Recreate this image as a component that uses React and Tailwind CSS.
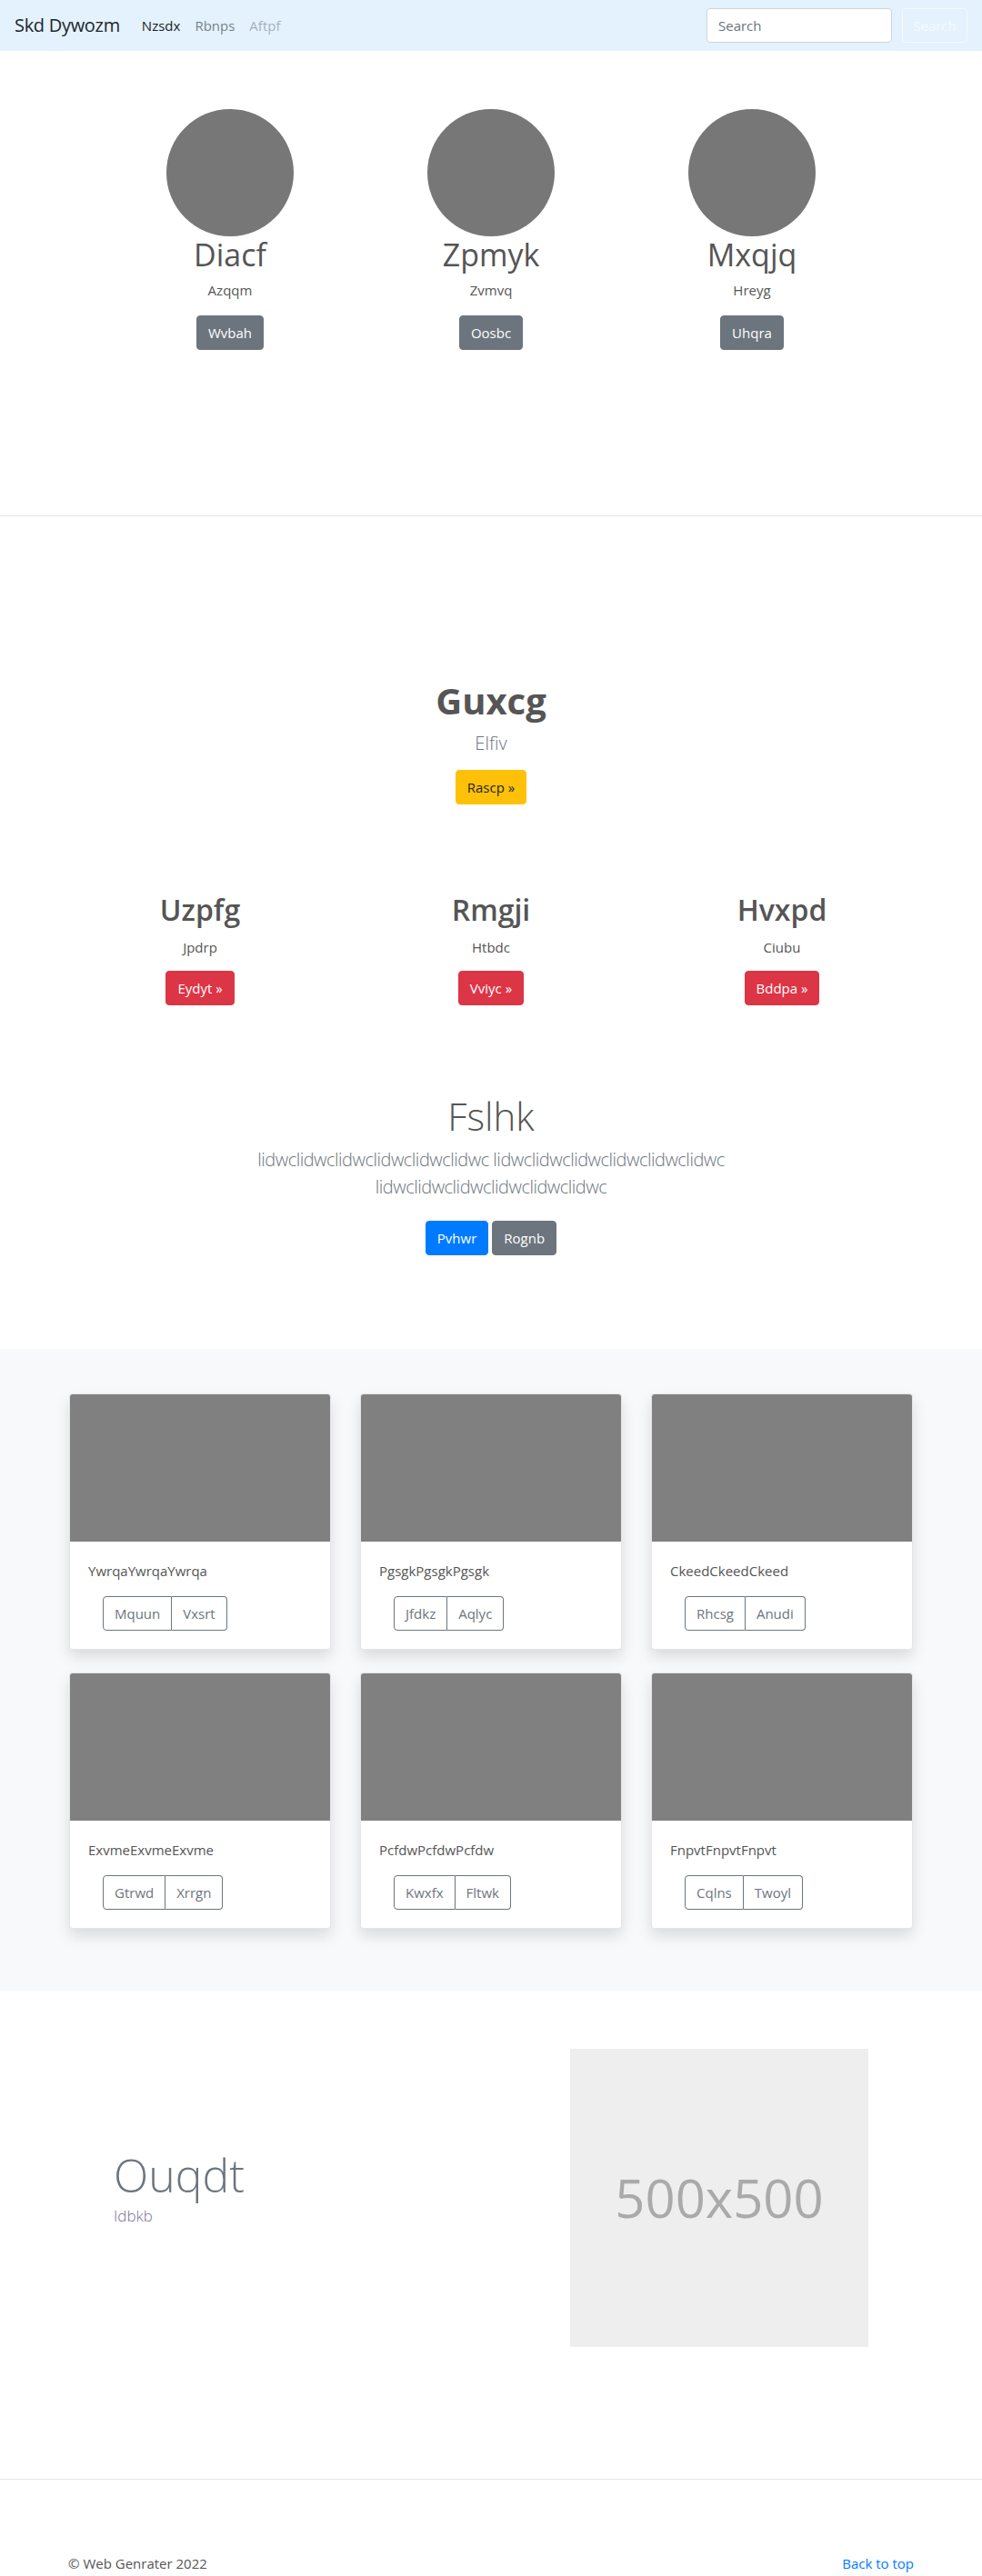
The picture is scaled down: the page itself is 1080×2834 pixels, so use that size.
import React from 'react';

const people = [
  { name: 'Diacf', sub: 'Azqqm', btn: 'Wvbah' },
  { name: 'Zpmyk', sub: 'Zvmvq', btn: 'Oosbc' },
  { name: 'Mxqjq', sub: 'Hreyg', btn: 'Uhqra' },
];

const columns = [
  { title: 'Uzpfg', sub: 'Jpdrp', btn: 'Eydyt »' },
  { title: 'Rmgji', sub: 'Htbdc', btn: 'Vviyc »' },
  { title: 'Hvxpd', sub: 'Ciubu', btn: 'Bddpa »' },
];

const cards = [
  { text: 'YwrqaYwrqaYwrqa', a: 'Mquun', b: 'Vxsrt' },
  { text: 'PgsgkPgsgkPgsgk', a: 'Jfdkz', b: 'Aqlyc' },
  { text: 'CkeedCkeedCkeed', a: 'Rhcsg', b: 'Anudi' },
  { text: 'ExvmeExvmeExvme', a: 'Gtrwd', b: 'Xrrgn' },
  { text: 'PcfdwPcfdwPcfdw', a: 'Kwxfx', b: 'Fltwk' },
  { text: 'FnpvtFnpvtFnpvt', a: 'Cqlns', b: 'Twoyl' },
];

export default function App() {
  return (
    <div className="bg-white text-[#555]" style={{ fontFamily: '"Open Sans", "Noto Sans", sans-serif' }}>
      {/* Navbar */}
      <nav className="h-14 bg-[#e3f2fd] flex items-center justify-between px-4">
        <div className="flex items-center">
          <span className="text-[20px] tracking-[-0.3px] text-[#212529] mr-4">Skd Dywozm</span>
          <a className="px-2 text-[15px] text-black/90">Nzsdx</a>
          <a className="px-2 text-[15px] text-black/50">Rbnps</a>
          <a className="px-2 text-[15px] text-black/30">Aftpf</a>
        </div>
        <div className="flex items-center">
          <input
            placeholder="Search"
            className="w-[204px] h-[38px] bg-white border border-[#ced4da] rounded px-3 text-[15px] placeholder:text-[#6c757d] outline-none"
          />
          <button className="ml-[11px] w-[72px] h-[38px] border border-[#f8f9fa] rounded text-[15px] text-[#f8f9fa]">
            Search
          </button>
        </div>
      </nav>

      {/* Circles */}
      <section className="pt-16 pb-[182px]">
        <div className="mx-auto w-[861px] grid grid-cols-3">
          {people.map((p) => (
            <div key={p.name} className="flex flex-col items-center">
              <div className="w-[140px] h-[140px] rounded-full bg-[#777]" />
              <h2 className="text-[34px] leading-[1.2] text-[#555]">{p.name}</h2>
              <p className="mt-[6px] text-[15px] leading-6 text-[#555]">{p.sub}</p>
              <button className="mt-4 bg-[#6c757d] text-white text-[15px] leading-6 px-3 py-1.5 border border-[#6c757d] rounded">
                {p.btn}
              </button>
            </div>
          ))}
        </div>
      </section>

      <div className="h-px bg-[#e5e5e5]" />

      {/* Hero + columns + jumbotron */}
      <section className="pt-[179px] pb-[103px]">
        <div className="flex flex-col items-center">
          <h1 className="text-[40px] font-bold leading-[1.2] text-[#555]">Guxcg</h1>
          <p className="mt-2 text-[20px] font-light leading-[30px] text-[#6c757d]">Elfiv</p>
          <button className="mt-[14px] bg-[#ffc107] text-[#212529] text-[15px] leading-6 px-3 py-1.5 border border-[#ffc107] rounded">
            Rascp »
          </button>
        </div>

        <div className="mt-[97px] mx-auto w-[960px] grid grid-cols-3">
          {columns.map((c) => (
            <div key={c.title} className="flex flex-col items-center">
              <h2 className="text-[32px] font-semibold leading-[1.2] text-[#555]">{c.title}</h2>
              <p className="mt-[10px] text-[15px] leading-6 text-[#555]">{c.sub}</p>
              <button className="mt-[14px] bg-[#dc3545] text-white text-[15px] leading-6 px-3 py-1.5 border border-[#dc3545] rounded">
                {c.btn}
              </button>
            </div>
          ))}
        </div>

        <div className="mt-[97px] flex flex-col items-center text-center">
          <h1 className="text-[42px] font-light leading-[1.2] text-[#555]">Fslhk</h1>
          <p className="mt-[7px] text-[20px] font-light leading-[30px] tracking-[-0.5px] text-[#6c757d]">
            lidwclidwclidwclidwclidwclidwc lidwclidwclidwclidwclidwclidwc
            <br />
            lidwclidwclidwclidwclidwclidwc
          </p>
          <div className="mt-[22px] flex gap-1">
            <button className="bg-[#007bff] text-white text-[15px] leading-6 px-3 py-1.5 border border-[#007bff] rounded">
              Pvhwr
            </button>
            <button className="bg-[#6c757d] text-white text-[15px] leading-6 px-3 py-1.5 border border-[#6c757d] rounded">
              Rognb
            </button>
          </div>
        </div>
      </section>

      {/* Album */}
      <section className="bg-[#f8f9fa] pt-[49px] pb-[68px]">
        <div className="mx-auto w-[928px] grid grid-cols-3 gap-x-8 gap-y-[25px]">
          {cards.map((c) => (
            <div key={c.text} className="bg-white rounded border border-black/10 shadow-[0_8px_16px_rgba(0,0,0,0.12)] overflow-hidden">
              <div className="h-[162px] bg-[#808080]" />
              <div className="p-5">
                <p className="text-[15px] leading-6 text-[#555]">{c.text}</p>
                <div className="mt-4 ml-4 inline-flex">
                  <button className="text-[15px] leading-6 px-3 py-1.5 border border-[#6c757d] text-[#6c757d] rounded-l">
                    {c.a}
                  </button>
                  <button className="text-[15px] leading-6 px-3 py-1.5 border border-l-0 border-[#6c757d] text-[#6c757d] rounded-r">
                    {c.b}
                  </button>
                </div>
              </div>
            </div>
          ))}
        </div>
      </section>

      {/* Featurette */}
      <section className="pt-[64px] pb-[145px]">
        <div className="mx-auto w-[930px] flex items-center">
          <div className="flex-1 pl-[50px] pb-[22px]">
            <h2 className="text-[50px] font-light leading-[1.2] text-[#6c757d]">Ouqdt</h2>
            <p className="mt-[3px] text-[17px] font-light leading-6 text-[#7a6f9b]">Idbkb</p>
          </div>
          <div className="mr-[50px] w-[328px] h-[328px] bg-[#eeeeee] flex items-center justify-center">
            <span className="text-[58px] text-[#aaaaaa]">500x500</span>
          </div>
        </div>
      </section>

      <div className="h-px bg-[#e5e5e5]" />

      {/* Footer */}
      <footer className="pt-[80px]">
        <div className="mx-auto w-[930px] flex justify-between text-[15px] leading-6">
          <p className="text-[#555]">© Web Genrater 2022</p>
          <a className="text-[#007bff]">Back to top</a>
        </div>
      </footer>
    </div>
  );
}
